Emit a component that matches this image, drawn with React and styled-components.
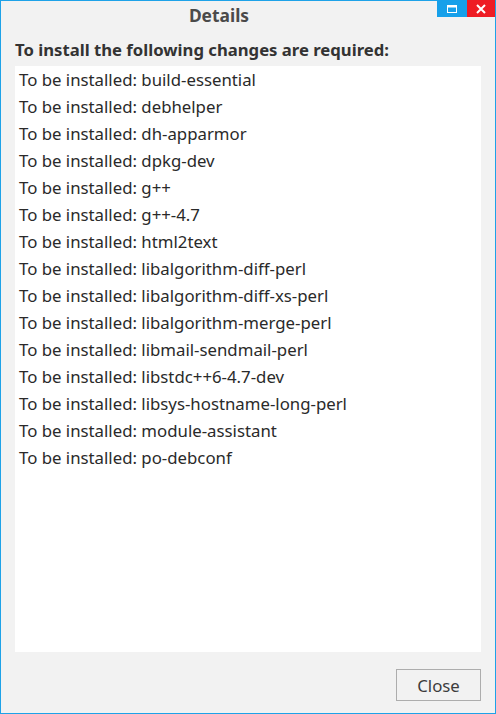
import React from "react";
import styled, { createGlobalStyle } from "styled-components";

const Global = createGlobalStyle`
  html, body { margin: 0; padding: 0; background: #f2f2f2; }
  body { font-family: "Noto Sans", "Open Sans", sans-serif; }
`;

const Window = styled.div`
  box-sizing: border-box;
  width: 496px;
  height: 714px;
  border: 1px solid #1ea2e8;
  background: #f2f2f2;
  display: flex;
  flex-direction: column;
  color: #3c3c3c;
`;

const TitleBar = styled.div`
  display: flex;
  align-items: flex-start;
  height: 28px;
`;

const Title = styled.div`
  flex: 1;
  text-align: center;
  padding-top: 2px;
  font-weight: 700;
  font-size: 17.4px;
  color: #4a4a4a;
`;

const Controls = styled.div`
  display: flex;
  margin-top: -1px;
`;

const WinButton = styled.div`
  width: ${(p) => p.$w}px;
  height: 17px;
  background: ${(p) => p.$bg};
  display: flex;
  align-items: center;
  justify-content: center;
`;

const Body = styled.div`
  flex: 1;
  display: flex;
  flex-direction: column;
  padding: 9px 14px 12px 14px;
  min-height: 0;
`;

const Heading = styled.div`
  font-weight: 700;
  font-size: 16.7px;
  color: #333;
  margin-bottom: 5px;
`;

const List = styled.div`
  flex: 1;
  background: #fff;
  padding: 0 4px;
`;

const Item = styled.div`
  font-size: 16.8px;
  line-height: 27px;
  color: #2a2a2a;
`;

const Footer = styled.div`
  display: flex;
  justify-content: flex-end;
  margin-top: 17px;
`;

const Button = styled.button`
  width: 85px;
  height: 32px;
  border: 1px solid #adadad;
  background: #f2f2f2;
  font-family: inherit;
  font-size: 16.8px;
  color: #3c3c3c;
  padding: 0;
`;

const items = [
  "build-essential",
  "debhelper",
  "dh-apparmor",
  "dpkg-dev",
  "g++",
  "g++-4.7",
  "html2text",
  "libalgorithm-diff-perl",
  "libalgorithm-diff-xs-perl",
  "libalgorithm-merge-perl",
  "libmail-sendmail-perl",
  "libstdc++6-4.7-dev",
  "libsys-hostname-long-perl",
  "module-assistant",
  "po-debconf",
];

export default function App() {
  return (
    <>
      <Global />
      <Window>
        <TitleBar>
          <Title>Details</Title>
          <Controls>
            <WinButton $w={30} $bg="#16a0ea">
              <svg width="10" height="8" viewBox="0 0 10 8">
                <rect x="0.5" y="0.5" width="9" height="7" fill="none" stroke="#fff" strokeWidth="1" />
                <rect x="0.5" y="0.5" width="9" height="2" fill="#fff" />
              </svg>
            </WinButton>
            <WinButton $w={28} $bg="#ee1c24">
              <svg width="10" height="10" viewBox="0 0 10 10">
                <path d="M1 1 L9 9 M9 1 L1 9" stroke="#fff" strokeWidth="2" />
              </svg>
            </WinButton>
          </Controls>
        </TitleBar>
        <Body>
          <Heading>To install the following changes are required:</Heading>
          <List>
            {items.map((it) => (
              <Item key={it}>To be installed: {it}</Item>
            ))}
          </List>
          <Footer>
            <Button>Close</Button>
          </Footer>
        </Body>
      </Window>
    </>
  );
}
